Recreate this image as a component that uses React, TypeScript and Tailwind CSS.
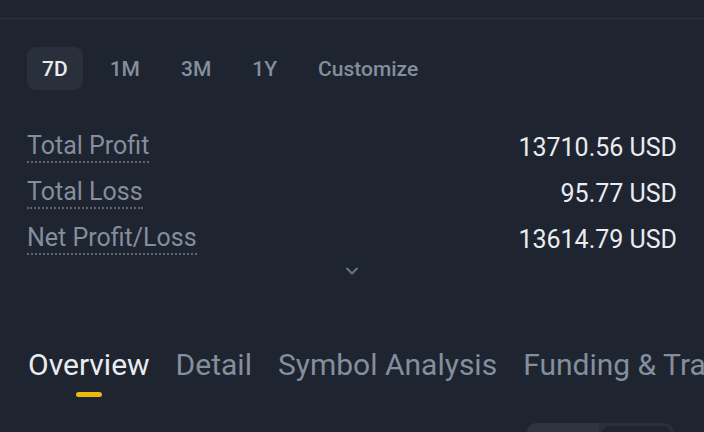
import { ChevronDown } from "lucide-react";

const periods = ["7D", "1M", "3M", "1Y", "Customize"];

const rows = [
  { label: "Total Profit", value: "13710.56 USD" },
  { label: "Total Loss", value: "95.77 USD" },
  { label: "Net Profit/Loss", value: "13614.79 USD" },
];

const tabs = ["Overview", "Detail", "Symbol Analysis", "Funding & Transfer"];

export default function App() {
  return (
    <div
      className="h-[432px] w-[704px] overflow-hidden bg-[#1e2430] text-[#eaecef]"
      style={{ fontFamily: "Roboto, 'Noto Sans', sans-serif" }}
    >
      <div className="h-[18px]" />
      <div className="h-px bg-[#2b323c]" />

      {/* Period selector */}
      <div className="mt-[28px] flex items-center gap-[13px] px-[27px]">
        {periods.map((p, i) => (
          <button
            key={p}
            className={
              i === 0
                ? "flex h-[43px] items-center rounded-[9px] bg-[#2a303b] px-[15px] pt-[2px] text-[21px] font-medium text-[#eaecef]"
                : "flex h-[43px] items-center px-[14px] pt-[2px] text-[21px] font-medium text-[#848e9c]"
            }
          >
            {p}
          </button>
        ))}
      </div>

      {/* Summary rows */}
      <div className="mt-[42px] flex flex-col gap-[14px] px-[27px]">
        {rows.map((r) => (
          <div key={r.label} className="flex h-[32px] items-center justify-between">
            <span className="border-b-2 border-dotted border-[#5e6673] pb-[2px] text-[25px] leading-[26px] text-[#848e9c]">
              {r.label}
            </span>
            <span className="text-[25px] leading-[26px] text-[#eaecef]">{r.value}</span>
          </div>
        ))}
      </div>

      <div className="mt-[5px] flex justify-center">
        <ChevronDown className="h-[20px] w-[20px] text-[#6b7380]" strokeWidth={2.5} />
      </div>

      {/* Tabs */}
      <div className="mt-[68px] flex gap-[26px] whitespace-nowrap px-[28px]">
        {tabs.map((t, i) => (
          <div key={t} className="flex shrink-0 flex-col items-center">
            <span
              className={
                i === 0
                  ? "text-[30px] leading-[32px] text-[#eaecef]"
                  : "text-[30px] leading-[32px] text-[#848e9c]"
              }
            >
              {t}
            </span>
            {i === 0 && <div className="mt-[11px] h-[5px] w-[26px] rounded-sm bg-[#f0b90b]" />}
          </div>
        ))}
      </div>

      <div className="mt-[26px] flex justify-end pr-[30px]">
        <div className="flex h-[30px] w-[147px] overflow-hidden rounded-[10px] bg-[#2a303b]">
          <div className="w-[72px] bg-[#2e3540]" />
          <div className="m-[3px] flex-1 rounded-[8px] bg-[#1e2430]" />
        </div>
      </div>
    </div>
  );
}
